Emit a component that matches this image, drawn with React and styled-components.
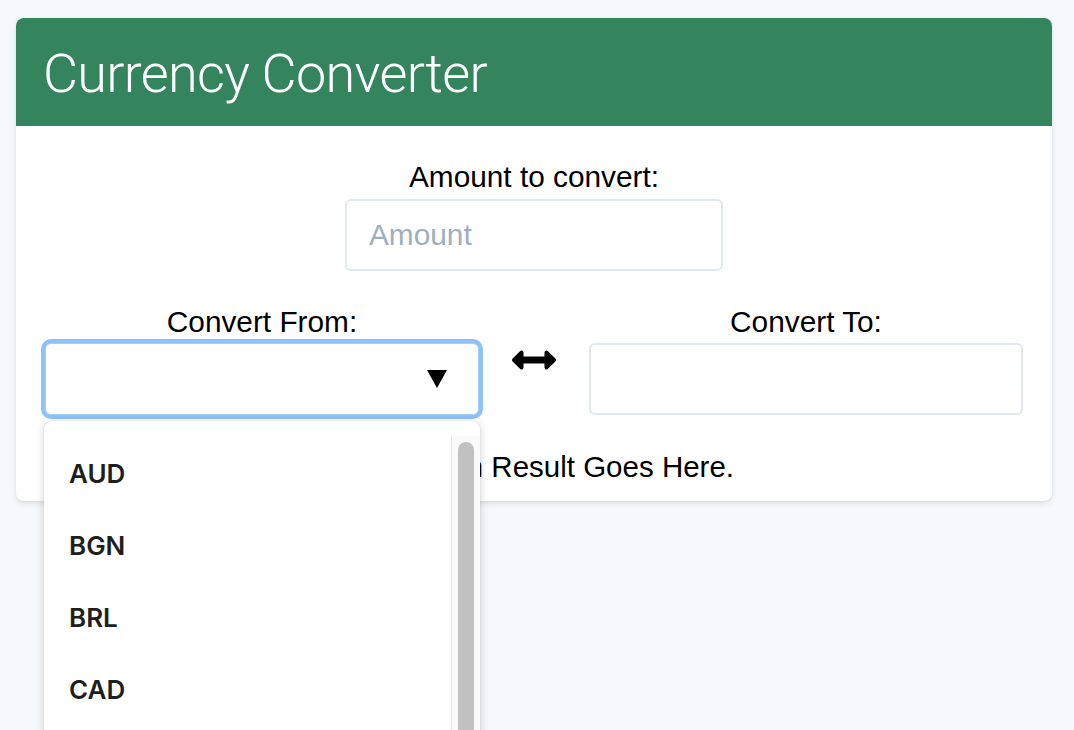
import React from "react";
import styled, { createGlobalStyle } from "styled-components";

const Global = createGlobalStyle`
  html, body { margin: 0; padding: 0; height: 730px; overflow: hidden; }
  body { background: #f6f9fc; font-family: "Liberation Sans", Arial, sans-serif; color: #000; }
`;

const Page = styled.div`
  padding: 18px 22px 0 16px;
`;

const Card = styled.div`
  width: 1036px;
  background: #fff;
  border-radius: 8px;
  box-shadow: 0 3px 6px rgba(0, 0, 0, 0.08), 0 1px 3px rgba(0, 0, 0, 0.06);
  position: relative;
`;

const Header = styled.header`
  height: 108px;
  background: #34855e;
  border-radius: 8px 8px 0 0;
  display: flex;
  align-items: center;
  padding: 2px 27px 0;
  box-sizing: border-box;
`;

const Title = styled.h1`
  margin: 0;
  color: #fff;
  font-family: Roboto, "Liberation Sans", sans-serif;
  font-weight: 300;
  font-size: 54px;
  letter-spacing: -0.7px;
`;

const Body = styled.div`
  padding: 34px 29px 17px;
  display: flex;
  flex-direction: column;
  align-items: center;
`;

const Label = styled.label`
  display: block;
  font-size: 29.8px;
  line-height: 34px;
  text-align: center;
  margin-bottom: ${(p) => p.$gap || 5}px;
`;

const Field = styled.div`
  display: flex;
  flex-direction: column;
  align-items: ${(p) => (p.$stretch ? "stretch" : "center")};
`;

const Input = styled.input`
  width: 378px;
  height: 72px;
  box-sizing: border-box;
  border: 2px solid #e2e8f0;
  border-radius: 6px;
  padding: 0 22px;
  font-family: "Liberation Sans", Arial, sans-serif;
  font-size: 29.8px;
  color: #4a5568;
  outline: none;
  &::placeholder { color: #a0aec0; }
`;

const Row = styled.div`
  align-self: stretch;
  display: grid;
  grid-template-columns: 434px 1fr 434px;
  margin-top: 34px;
`;

const Box = styled.div`
  position: relative;
  height: 72px;
  box-sizing: border-box;
  border-radius: 6px;
  background: #fff;
  border: ${(p) => (p.$focused ? "1px solid #a6cdf9" : "2px solid #e2e8f0")};
  box-shadow: ${(p) => (p.$focused ? "0 0 0 4px #8ec1f8" : "none")};
  display: flex;
  align-items: center;
  justify-content: flex-end;
  padding-right: 31px;
`;

const Caret = styled.span`
  width: 0;
  height: 0;
  border-left: 10px solid transparent;
  border-right: 10px solid transparent;
  border-top: 18px solid #000;
`;

const Swap = styled.div`
  display: flex;
  justify-content: center;
  align-items: flex-start;
  padding-top: 45px;
`;

const Result = styled.p`
  margin: 35px 0 0;
  font-size: 29.5px;
  line-height: 34px;
  text-align: center;
`;

const Menu = styled.div`
  position: absolute;
  left: 28px;
  top: 403px;
  width: 436px;
  height: 330px;
  background: #fff;
  border-radius: 8px;
  box-shadow: 0 2px 10px rgba(0, 0, 0, 0.18), 0 0 1px rgba(0, 0, 0, 0.2);
  overflow: hidden;
  z-index: 5;
`;

const List = styled.ul`
  list-style: none;
  margin: 0;
  padding: 17px 0 0;
`;

const Item = styled.li`
  height: 72px;
  line-height: 72px;
  padding-left: 25px;
  font-family: Inter, "Liberation Sans", sans-serif;
  font-weight: 600;
  font-size: 26px;
  color: #1e1e1e;
`;

const Track = styled.div`
  position: absolute;
  top: 15px;
  right: 0;
  bottom: 0;
  width: 29px;
  background: #fafafa;
  border-left: 1px solid #e6e6e6;
  box-sizing: border-box;
`;

const Thumb = styled.div`
  position: absolute;
  top: 6px;
  left: 6px;
  width: 16px;
  bottom: -20px;
  border-radius: 8px;
  background: #c1c1c1;
`;

const SwapIcon = () => (
  <svg width="44" height="20" viewBox="0 148 512 216" aria-hidden="true">
    <path
      fill="#000"
      d="M377.941 169.941V216H134.059v-46.059c0-21.382-25.851-32.09-40.971-16.971L7.029 239.029c-9.373 9.373-9.373 24.568 0 33.941l86.059 86.059c15.119 15.119 40.971 4.411 40.971-16.971V296h243.882v46.059c0 21.382 25.851 32.09 40.971 16.971l86.059-86.059c9.373-9.373 9.373-24.568 0-33.941l-86.059-86.059c-15.119-15.12-40.971-4.412-40.971 16.97z"
    />
  </svg>
);

export default function App() {
  const currencies = ["AUD", "BGN", "BRL", "CAD"];
  return (
    <Page>
      <Global />
      <Card>
        <Header>
          <Title>Currency Converter</Title>
        </Header>
        <Body>
          <Field>
            <Label>Amount to convert:</Label>
            <Input placeholder="Amount" />
          </Field>
          <Row>
            <Field $stretch>
              <Label $gap={4}>Convert From:</Label>
              <Box $focused>
                <Caret />
              </Box>
            </Field>
            <Swap>
              <SwapIcon />
            </Swap>
            <Field $stretch>
              <Label $gap={4}>Convert To:</Label>
              <Box />
            </Field>
          </Row>
          <Result>Conversion Result Goes Here.</Result>
        </Body>
        <Menu>
          <List>
            {currencies.map((c) => (
              <Item key={c}>{c}</Item>
            ))}
          </List>
          <Track>
            <Thumb />
          </Track>
        </Menu>
      </Card>
    </Page>
  );
}
